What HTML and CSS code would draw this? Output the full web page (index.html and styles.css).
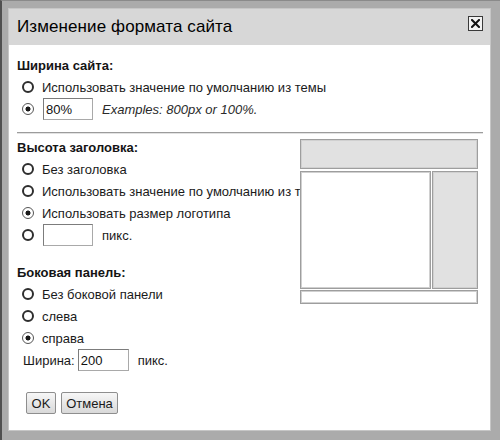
FILE: index.html
```html
<!DOCTYPE html>
<html>
<head>
<meta charset="utf-8">
<link rel="stylesheet" href="styles.css">
</head>
<body>
<div class="dialog">
  <div class="header">
    <span class="title">Изменение формата сайта</span>
    <button class="close" aria-label="Закрыть">
      <svg width="9" height="9" viewBox="0 0 9 9"><path d="M1 1L8 8M8 1L1 8" stroke="#111" stroke-width="2" stroke-linecap="square"/></svg>
    </button>
  </div>
  <div class="content">
    <div class="row label">Ширина сайта:</div>
    <label class="row radio-row"><input type="radio" name="w"><span>Использовать значение по умолчанию из темы</span></label>
    <label class="row radio-row"><input type="radio" name="w" checked><input class="text w49" type="text" value="80%"><span class="examples">Examples: 800px or 100%.</span></label>
    <div class="sep"></div>
    <div class="row label">Высота заголовка:</div>
    <label class="row radio-row"><input type="radio" name="h"><span>Без заголовка</span></label>
    <label class="row radio-row"><input type="radio" name="h"><span>Использовать значение по умолчанию из темы</span></label>
    <label class="row radio-row"><input type="radio" name="h" checked><span>Использовать размер логотипа</span></label>
    <label class="row radio-row"><input type="radio" name="h"><input class="text w49" type="text" value=""><span class="unit">пикс.</span></label>
    <div class="row label sec3">Боковая панель:</div>
    <label class="row radio-row"><input type="radio" name="s"><span>Без боковой панели</span></label>
    <label class="row radio-row"><input type="radio" name="s"><span>слева</span></label>
    <label class="row radio-row"><input type="radio" name="s" checked><span>справа</span></label>
    <div class="row width-row"><span>Ширина:</span><input class="text w50" type="text" value="200"><span class="unit">пикс.</span></div>
    <div class="buttons">
      <button class="btn ok">OK</button>
      <button class="btn cancel">Отмена</button>
    </div>
  </div>
  <div class="preview">
    <div class="p-head"></div>
    <div class="p-mid">
      <div class="p-main"></div>
      <div class="p-side"></div>
    </div>
    <div class="p-foot"></div>
  </div>
</div>
</body>
</html>
```
FILE: styles.css
```css
html, body {
  margin: 0;
}
body {
  width: 500px;
  height: 440px;
  overflow: hidden;
  box-sizing: border-box;
  background: #ababab;
  border-left: 2px solid #505050;
  border-top: 1px solid #8a8a8a;
  padding: 8px 0 0 7px;
  font-family: "Liberation Sans", Arial, sans-serif;
  color: #1a1a1a;
}
.dialog {
  position: relative;
  width: 481px;
  height: 421px;
  background: #fff;
  box-shadow: 0 0 0 1px #c6c6c6;
}
.header {
  height: 36px;
  background: #d7d7d7;
  display: flex;
  align-items: center;
  padding-left: 8px;
  position: relative;
}
.title {
  font-size: 17px;
  line-height: 36px;
  color: #000;
  letter-spacing: 0.1px;
}
.close {
  position: absolute;
  left: 459px;
  top: 7px;
  width: 15px;
  height: 15px;
  padding: 0;
  margin: 0;
  border: 1.5px solid #3a3a3a;
  background: #f2f2f2;
  display: flex;
  align-items: center;
  justify-content: center;
}
.content {
  padding: 9px 7px 0 8px;
  font-size: 13px;
}
.row {
  display: flex;
  align-items: center;
  height: 22px;
  white-space: nowrap;
}
.label {
  font-weight: bold;
  color: #141414;
}
.sec3 {
  margin-top: 15px;
}
.radio-row {
  padding-left: 5px;
}
input[type="radio"] {
  appearance: none;
  -webkit-appearance: none;
  box-sizing: border-box;
  width: 12px;
  height: 12px;
  margin: 0 8px 0 0;
  border: 2px solid #2e2e2e;
  border-radius: 50%;
  background: #fff;
  flex: none;
}
input[type="radio"]:checked {
  border: 1.5px solid #555;
  background: radial-gradient(circle, #1a1a1a 0 2.2px, #fff 2.8px);
}
.text {
  box-sizing: border-box;
  height: 22px;
  margin: 0 0 0 1px;
  padding: 1px 2px 0;
  border: 1px solid #7c7c7c;
  border-right-color: #a9a9a9;
  border-bottom-color: #a9a9a9;
  font-family: "Liberation Sans", Arial, sans-serif;
  font-size: 13px;
  color: #111;
  background: #fff;
}
.w49 { width: 50px; }
.w50 { width: 51px; margin-left: 3px; }
.examples {
  margin-left: 9px;
  font-style: italic;
  color: #2a2a2a;
}
.unit {
  margin-left: 9px;
}
.width-row {
  padding-left: 6px;
}
.sep {
  margin: 12px 0 2px 0;
  height: 1px;
  background: #9c9c9c;
  border-bottom: 1px solid #e2e2e2;
  width: 466px;
}
.buttons {
  display: flex;
  gap: 5px;
  margin-top: 21px;
  padding-left: 9px;
}
.btn {
  height: 22px;
  padding: 0;
  border: 1px solid #8e8e8e;
  border-radius: 2px;
  background: linear-gradient(#f7f7f7, #d9d9d9);
  font-family: "Liberation Sans", Arial, sans-serif;
  font-size: 13px;
  color: #1a1a1a;
}
.ok { width: 30px; }
.cancel { width: 57px; }
.preview {
  position: absolute;
  left: 291px;
  top: 130px;
  width: 178px;
  display: flex;
  flex-direction: column;
}
.p-head, .p-main, .p-side, .p-foot {
  box-sizing: border-box;
  border: 1px solid #9e9e9e;
  box-shadow: inset 0 0 0 1px #d0d0d0;
}
.p-head {
  height: 30px;
  background: #e1e1e1;
}
.p-mid {
  display: flex;
  gap: 1px;
  margin-top: 2px;
  height: 118px;
}
.p-main {
  width: 131px;
  background: #fff;
}
.p-side {
  width: 46px;
  background: #e1e1e1;
}
.p-foot {
  margin-top: 1px;
  height: 14px;
  background: #fff;
}
```
